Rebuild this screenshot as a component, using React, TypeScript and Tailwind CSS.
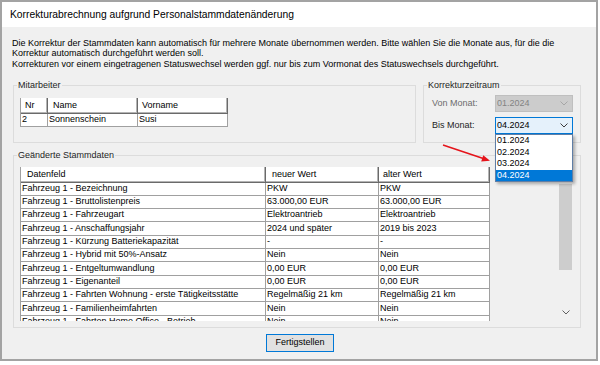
import React from "react";

const rows: string[][] = [
  ["Fahrzeug 1 - Bezeichnung", "PKW", "PKW"],
  ["Fahrzeug 1 - Bruttolistenpreis", "63.000,00 EUR", "63.000,00 EUR"],
  ["Fahrzeug 1 - Fahrzeugart", "Elektroantrieb", "Elektroantrieb"],
  ["Fahrzeug 1 - Anschaffungsjahr", "2024 und später", "2019 bis 2023"],
  ["Fahrzeug 1 - Kürzung Batteriekapazität", "-", "-"],
  ["Fahrzeug 1 - Hybrid mit 50%-Ansatz", "Nein", "Nein"],
  ["Fahrzeug 1 - Entgeltumwandlung", "0,00 EUR", "0,00 EUR"],
  ["Fahrzeug 1 - Eigenanteil", "0,00 EUR", "0,00 EUR"],
  ["Fahrzeug 1 - Fahrten Wohnung - erste Tätigkeitsstätte", "Regelmäßig 21 km", "Regelmäßig 21 km"],
  ["Fahrzeug 1 - Familienheimfahrten", "Nein", "Nein"],
  ["Fahrzeug 1 - Fahrten Home Office - Betrieb", "Nein", "Nein"],
];
const tall = [false, false, false, true, false, false, true, false, false, true, false];

function Chevron({ color, up }: { color: string; up?: boolean }) {
  return (
    <svg width="8" height="5" viewBox="0 0 8 5">
      <path d={up ? "M0.5 4.5 L4 1 L7.5 4.5" : "M0.5 0.5 L4 4 L7.5 0.5"} fill="none" stroke={color} strokeWidth="1" />
    </svg>
  );
}

const hdrCell = "h-full flex items-center bg-white border-r border-b border-[#6a6a6a] shadow-[inset_-1px_-1px_0_#b4b4b4]";
const cell = "h-full flex items-center border-r border-[#a0a0a0] pl-[1px] whitespace-nowrap overflow-hidden";

export default function App() {
  return (
    <div className="w-[600px] h-[365px] bg-white font-['Liberation_Sans',Arial,sans-serif] text-black">
      <div className="relative flex flex-col w-[598px] h-[361px] border-2 border-[#a3a3a3]">
        <div className="h-[25px] shrink-0 bg-white flex items-center pl-[8px] text-[10.3px]">
          Korrekturabrechnung aufgrund Personalstammdatenänderung
        </div>
        <div className="flex-1 bg-[#f0f0f0] pt-[11px] pl-[10px] text-[9px]">
          <p className="h-[31px] leading-[10.3px] whitespace-nowrap">
            Die Korrektur der Stammdaten kann automatisch für mehrere Monate übernommen werden. Bitte wählen Sie die Monate aus, für die die
            <br />
            Korrektur automatisch durchgeführt werden soll.
            <br />
            Korrekturen vor einem eingetragenen Statuswechsel werden ggf. nur bis zum Vormonat des Statuswechsels durchgeführt.
          </p>

          <div className="flex items-start gap-[7px] mt-[11px] ml-[1px]">
            <fieldset className="w-[403px] border border-[#dcdcdc]">
              <legend className="ml-[3px] px-[1px] leading-[11px] text-[#1e1e1e]">Mitarbeiter</legend>
              <div className="pl-[6px] pt-[7px] pb-[15px]">
                <div className="w-[208px] border-l border-[#a0a0a0]">
                  <div className="flex h-[16px]">
                    <div className={`${hdrCell} w-[27px] pl-[4px]`}>Nr</div>
                    <div className={`${hdrCell} w-[90px] pl-[5px]`}>Name</div>
                    <div className={`${hdrCell} w-[90px] pl-[4px]`}>Vorname</div>
                  </div>
                  <div className="flex h-[13px] bg-white border-b border-[#a0a0a0]">
                    <div className={`${cell} w-[27px]`}>2</div>
                    <div className={`${cell} w-[90px]`}>Sonnenschein</div>
                    <div className={`${cell} w-[90px]`}>Susi</div>
                  </div>
                </div>
              </div>
            </fieldset>

            <fieldset className="w-[158px] border border-[#dcdcdc]">
              <legend className="ml-[3px] px-[1px] leading-[11px] text-[#1e1e1e]">Korrekturzeitraum</legend>
              <div className="flex flex-col gap-[5px] pl-[8px] pt-[4px] pb-[8px]">
                <div className="flex items-center">
                  <span className="w-[63px] text-[#6d6d6d]">Von Monat:</span>
                  <div className="w-[78px] h-[17px] flex items-center justify-between border border-[#bfbfbf] bg-[#cccccc] pl-[1px] pr-[4px] text-[#838383]">
                    <span>01.2024</span>
                    <Chevron color="#a6a6a6" />
                  </div>
                </div>
                <div className="flex items-center">
                  <span className="w-[63px] text-[#1e1e1e]">Bis Monat:</span>
                  <div className="relative">
                    <div className="w-[78px] h-[17px] flex items-center justify-between border border-[#0078d7] bg-[#e5f1fb] pl-[1px] pr-[4px]">
                      <span>04.2024</span>
                      <Chevron color="#3c3c3c" />
                    </div>
                    <div className="absolute left-0 top-full z-10 w-[78px] border border-[#5f7ea6] bg-white shadow-[2px_2px_3px_rgba(0,0,0,0.3)]">
                      <div className="h-[11.5px] leading-[11.5px] pl-[1px]">01.2024</div>
                      <div className="h-[11.5px] leading-[11.5px] pl-[1px]">02.2024</div>
                      <div className="h-[11.5px] leading-[11.5px] pl-[1px]">03.2024</div>
                      <div className="h-[11.5px] leading-[11.5px] pl-[1px] bg-[#0078d7] text-white">04.2024</div>
                    </div>
                  </div>
                </div>
              </div>
            </fieldset>
          </div>

          <fieldset className="w-[568px] mt-[7px] ml-[1px] border border-[#dcdcdc]">
            <legend className="ml-[3px] px-[1px] leading-[11px] text-[#1e1e1e]">Geänderte Stammdaten</legend>
            <div className="pl-[6px] pt-[6px] pb-[6px]">
              <div className="flex w-[554px] h-[154px] overflow-hidden">
                <div className="w-[470px] flex flex-col border-l border-[#a0a0a0] shrink-0">
                  <div className="flex h-[16px] shrink-0">
                    <div className={`${hdrCell} w-[245px] pl-[6px]`}>Datenfeld</div>
                    <div className={`${hdrCell} w-[113px] pl-[6px]`}>neuer Wert</div>
                    <div className={`${hdrCell} w-[111px] pl-[4px]`}>alter Wert</div>
                  </div>
                  {rows.map((r, i) => (
                    <div
                      key={i}
                      className={`flex shrink-0 bg-white border-b border-[#a0a0a0] ${tall[i] ? "h-[14px]" : "h-[13px]"}`}
                    >
                      <div className={`${cell} w-[245px]`}>{r[0]}</div>
                      <div className={`${cell} w-[113px]`}>{r[1]}</div>
                      <div className={`${cell} w-[111px]`}>{r[2]}</div>
                    </div>
                  ))}
                </div>
                <div className="flex-1" />
                <div className="w-[17px] shrink-0 flex flex-col bg-[#f0f0f0]">
                  <div className="h-[17px] flex items-center justify-center">
                    <Chevron color="#606060" up />
                  </div>
                  <div className="mx-[2px] h-[86px] bg-[#cdcdcd]" />
                  <div className="flex-1" />
                  <div className="h-[17px] flex items-center justify-center">
                    <Chevron color="#606060" />
                  </div>
                </div>
              </div>
            </div>
          </fieldset>

          <div className="mt-[6px] ml-[254px] w-[68px] h-[18px] flex items-center justify-center border border-[#0078d7] bg-[#e1e1e1]">
            Fertigstellen
          </div>
        </div>

        <svg className="absolute left-[438px] top-[140px] z-20" width="54" height="24" viewBox="0 0 54 24">
          <line x1="3" y1="3" x2="44" y2="16.7" stroke="#e5141b" strokeWidth="1.6" />
          <polygon points="50,18.8 41.2,19.6 43.3,13.2" fill="#e5141b" />
        </svg>
      </div>
    </div>
  );
}
